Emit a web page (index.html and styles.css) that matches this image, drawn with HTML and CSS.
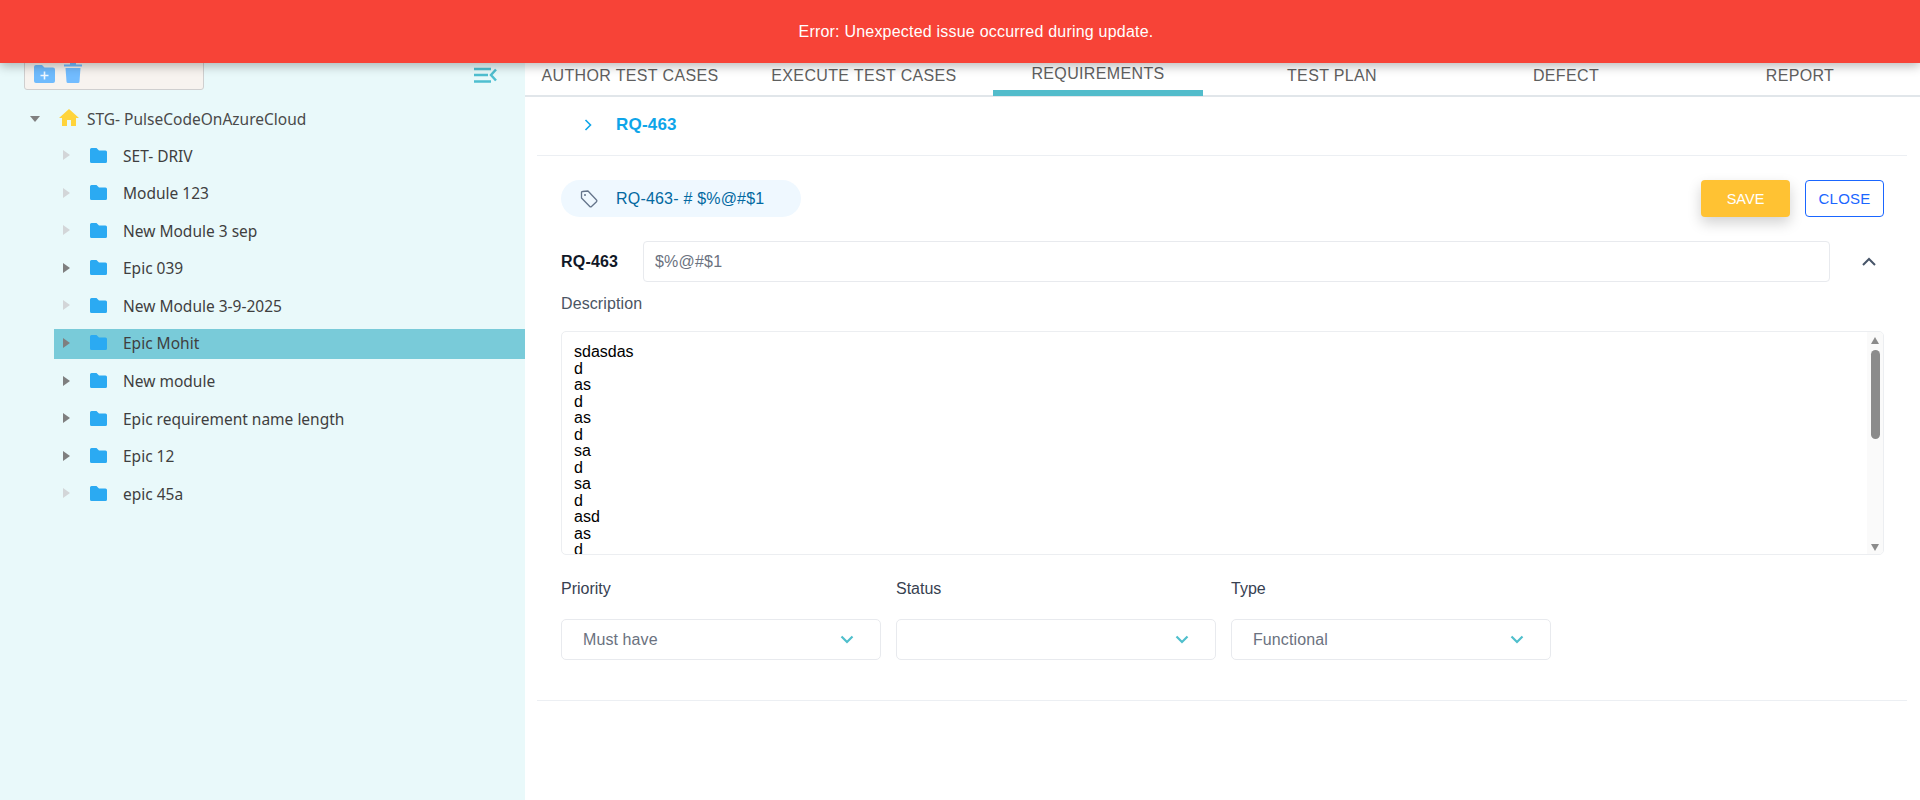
FILE: index.html
```html
<!DOCTYPE html>
<html lang="en">
<head>
<meta charset="utf-8">
<title>Requirements</title>
<link rel="stylesheet" href="styles.css">
</head>
<body>
<div class="toast">Error: Unexpected issue occurred during update.</div>
<div class="app">
  <aside class="sidebar">
    <div class="side-head">
      <div class="toolbar">
        <svg class="tool-icon" width="21" height="18" viewBox="0 0 21 18"><path fill="#6fbbfd" d="M2 0H8L10.5 2.500H19A2 2 0 0 1 21 4.500V16A2 2 0 0 1 19 18H2A2 2 0 0 1 0 16V2A2 2 0 0 1 2 0Z"/><path fill="#fff" opacity=".9" d="M9.700 6.500H11.300V9.700H14.500V11.300H11.300V14.500H9.700V11.300H6.500V9.700H9.700Z"/></svg>
        <svg class="tool-icon trash" width="18" height="20" viewBox="0 0 18 20"><path fill="#72bcff" d="M6 0H12V1.500H18V3.500H0V1.500H6ZM1.500 5H16.500L15.500 18.500A1.500 1.500 0 0 1 14 20H4A1.500 1.500 0 0 1 2.500 18.500Z"/></svg>
      </div>
      <svg class="collapse" width="23" height="16" viewBox="0 0 23 16"><path fill="none" stroke="#4fbfd0" stroke-width="2.500" d="M0 2H17M0 8H14M0 14.500H17"/><path fill="none" stroke="#4fbfd0" stroke-width="2.500" d="M22 2.500L17 8L22 13.500"/></svg>
    </div>
    <div class="tree-root">
      <span class="caret-down"></span>
      <svg class="home" width="24" height="24" viewBox="0 0 24 24"><path fill="#ffd43b" d="M10 20v-6h4v6h5v-8h3L12 3 2 12h3v8z"/></svg>
      <span class="root-name">STG- PulseCodeOnAzureCloud</span>
    </div>
    <ul class="tree">
      <li class="node"><span class="caret leaf"></span><svg class="folder" viewBox="0 0 17 15"><use href="#folder-shape"/></svg><span class="node-name">SET- DRIV</span></li>
      <li class="node"><span class="caret leaf"></span><svg class="folder" viewBox="0 0 17 15"><use href="#folder-shape"/></svg><span class="node-name">Module 123</span></li>
      <li class="node"><span class="caret leaf"></span><svg class="folder" viewBox="0 0 17 15"><use href="#folder-shape"/></svg><span class="node-name">New Module 3 sep</span></li>
      <li class="node"><span class="caret"></span><svg class="folder" viewBox="0 0 17 15"><use href="#folder-shape"/></svg><span class="node-name">Epic 039</span></li>
      <li class="node"><span class="caret leaf"></span><svg class="folder" viewBox="0 0 17 15"><use href="#folder-shape"/></svg><span class="node-name">New Module 3-9-2025</span></li>
      <li class="node selected"><span class="caret"></span><svg class="folder" viewBox="0 0 17 15"><use href="#folder-shape"/></svg><span class="node-name">Epic Mohit</span></li>
      <li class="node"><span class="caret"></span><svg class="folder" viewBox="0 0 17 15"><use href="#folder-shape"/></svg><span class="node-name">New module</span></li>
      <li class="node"><span class="caret"></span><svg class="folder" viewBox="0 0 17 15"><use href="#folder-shape"/></svg><span class="node-name">Epic requirement name length</span></li>
      <li class="node"><span class="caret"></span><svg class="folder" viewBox="0 0 17 15"><use href="#folder-shape"/></svg><span class="node-name">Epic 12</span></li>
      <li class="node"><span class="caret leaf"></span><svg class="folder" viewBox="0 0 17 15"><use href="#folder-shape"/></svg><span class="node-name">epic 45a</span></li>
    </ul>
    <svg class="defs" width="0" height="0"><defs><path id="folder-shape" fill="#2baaf2" d="M1.500 0H6.500L9 2.500H15.500A1.500 1.500 0 0 1 17 4V13.500A1.500 1.500 0 0 1 15.500 15H1.500A1.500 1.500 0 0 1 0 13.500V1.500A1.500 1.500 0 0 1 1.500 0Z"/></defs></svg>
  </aside>
  <main class="main">
    <nav class="tabs">
      <a class="tab">AUTHOR TEST CASES</a>
      <a class="tab">EXECUTE TEST CASES</a>
      <a class="tab active">REQUIREMENTS</a>
      <a class="tab">TEST PLAN</a>
      <a class="tab">DEFECT</a>
      <a class="tab">REPORT</a>
    </nav>
    <header class="crumb">
      <svg width="8" height="12" viewBox="0 0 8 12"><path fill="none" stroke="#0ea5e9" stroke-width="1.600" d="M1.500 1L6.500 6L1.500 11"/></svg>
      <span class="crumb-id">RQ-463</span>
    </header>
    <section class="form">
      <div class="actions">
        <div class="pill">
          <svg width="18" height="18" viewBox="0 0 18 18"><path fill="none" stroke="#64748b" stroke-width="1.300" stroke-linejoin="round" d="M1.500 2.500A1 1 0 0 1 2.500 1.500L8 1L16.500 10A1.200 1.200 0 0 1 16.500 11.700L11.500 16.500A1.200 1.200 0 0 1 9.800 16.500L1.500 8Z"/><circle cx="5" cy="5" r="1" fill="#64748b"/></svg>
          <span>RQ-463- # $%@#$1</span>
        </div>
        <div class="buttons">
          <button class="btn save">SAVE</button>
          <button class="btn close">CLOSE</button>
        </div>
      </div>
      <div class="title-row">
        <label class="title-label">RQ-463</label>
        <input class="title-input" type="text" value="$%@#$1">
        <svg class="collapse-up" width="14" height="9" viewBox="0 0 14 9"><path fill="none" stroke="#475569" stroke-width="2" d="M1 8L7 2L13 8"/></svg>
      </div>
      <div class="desc-label">Description</div>
      <div class="desc-wrap">
        <textarea class="desc" readonly>sdasdas
d
as
d
as
d
sa
d
sa
d
asd
as
d
as
d
sa
d
as
d
sa
d
as
d
sa
d
as
d
sa
d</textarea>
        <div class="scrollbar">
          <span class="arrow-up"></span>
          <span class="thumb"></span>
          <span class="arrow-down"></span>
        </div>
      </div>
      <div class="fields">
        <div class="field">
          <div class="field-label">Priority</div>
          <div class="select"><span>Must have</span><svg width="14" height="9" viewBox="0 0 14 9"><path fill="none" stroke="#4fbfcc" stroke-width="2.200" d="M1.500 1.500L7 7L12.500 1.500"/></svg></div>
        </div>
        <div class="field">
          <div class="field-label">Status</div>
          <div class="select"><span></span><svg width="14" height="9" viewBox="0 0 14 9"><path fill="none" stroke="#4fbfcc" stroke-width="2.200" d="M1.500 1.500L7 7L12.500 1.500"/></svg></div>
        </div>
        <div class="field">
          <div class="field-label">Type</div>
          <div class="select"><span>Functional</span><svg width="14" height="9" viewBox="0 0 14 9"><path fill="none" stroke="#4fbfcc" stroke-width="2.200" d="M1.500 1.500L7 7L12.500 1.500"/></svg></div>
        </div>
      </div>
    </section>
  </main>
</div>
</body>
</html>
```
FILE: styles.css
```css
* { box-sizing: border-box; }
html, body { margin: 0; height: 100%; overflow: hidden; background: #fff; }
body { font-family: "Liberation Sans", Arial, sans-serif; font-size: 16px; color: #374151; }

.toast {
  position: absolute; top: 0; left: 0; right: 0; height: 63px; z-index: 10;
  display: flex; align-items: center; justify-content: center;
  padding-left: 32px;
  background: #f74337; color: #fff; font-size: 16px; letter-spacing: .21px;
  box-shadow: 0 3px 10px rgba(0, 0, 0, .28);
}

.app { display: flex; height: 800px; }

.sidebar { width: 525px; flex: none; background: #e9f9fa; padding-top: 50px; font-family: "Noto Sans", sans-serif; font-size: 15.500px; color: #444; }
.side-head { display: flex; justify-content: space-between; padding: 0 28px 0 24px; height: 40px; }
.toolbar { width: 180px; height: 40px; display: flex; align-items: flex-start; gap: 9px; padding: 13px 0 0 9px; background: #f7f3ef; border: 1px solid #cfcfcf; border-radius: 3px; }
.tool-icon { display: block; margin-top: 1px; }
.trash { margin-top: -1px; }
.collapse { margin-top: 17px; display: block; }

.tree-root { display: flex; align-items: center; height: 30px; margin-top: 14px; padding-left: 30px; }
.caret-down { width: 0; height: 0; border-left: 5.500px solid transparent; border-right: 5.500px solid transparent; border-top: 6px solid #808080; }
.home { margin-left: 17px; margin-right: 6px; margin-top: -2px; }
.root-name { color: #4a4a4a; }

.tree { list-style: none; margin: 7px 0 0 54px; padding: 0; display: flex; flex-direction: column; gap: 7.600px; }
.node { display: flex; align-items: center; height: 30px; padding-left: 9px; color: #3f3f3f; }
.node.selected { background: #79cbd9; }
.node-name { margin-top: -1px; }
.caret { width: 0; height: 0; margin-top: -2px; border-top: 5.500px solid transparent; border-bottom: 5.500px solid transparent; border-left: 7px solid #7f7f7f; }
.caret.leaf { border-left-color: #d3d6d8; }
.folder { width: 17px; height: 15px; margin: -2px 16px 0 20px; flex: none; }
.defs { position: absolute; }

.main { flex: 1; min-width: 0; padding-top: 50px; }
.tabs { display: flex; gap: 24px; height: 47px; border-bottom: 2px solid #e1e6ea; }
.tab { width: 210px; height: 46px; display: flex; align-items: center; justify-content: center; padding-top: 6px; color: #5f5f5f; white-space: nowrap; letter-spacing: .35px; }
.tab.active { border-bottom: 6px solid #52bccb; padding-top: 8px; }

.crumb { display: flex; align-items: center; gap: 24px; height: 59px; margin: 0 13px 0 12px; padding: 0 0 2px 47px; border-bottom: 1px solid #eceff3; }
.crumb-id { color: #0ea5e9; font-weight: 700; font-size: 17px; letter-spacing: .2px; }

.form { margin: 0 13px 0 12px; padding: 24px 23px 40px 24px; border-bottom: 1px solid #eceff3; }
.actions { display: flex; justify-content: space-between; height: 37px; }
.pill { display: flex; align-items: center; gap: 18px; padding: 0 37px 0 19px; background: #eff8ff; border-radius: 19px; color: #0369a1; letter-spacing: .2px; }
.buttons { display: flex; gap: 15px; }
.btn { font-family: inherit; height: 37px; border-radius: 4px; padding: 0; cursor: pointer; }
.save { width: 89px; background: #ffc233; border: 0; color: #fff; font-size: 14.500px; box-shadow: 0 6px 14px rgba(0, 0, 0, .18); }
.close { width: 79px; background: #fff; border: 1px solid #1a66ff; color: #1a66ff; font-size: 15px; letter-spacing: .2px; }

.title-row { display: flex; align-items: center; margin-top: 24px; height: 41px; }
.title-label { width: 82px; flex: none; font-weight: 700; font-size: 16px; letter-spacing: .2px; color: #111827; }
.title-input { flex: 1; min-width: 0; height: 41px; margin-right: 32px; padding: 0 11px; border: 1px solid #e8eaee; border-radius: 4px; font: inherit; letter-spacing: .2px; color: #6b7280; outline: 0; }
.collapse-up { margin-right: 8px; flex: none; }

.desc-label { margin-top: 13px; height: 18px; line-height: 18px; color: #4b5563; letter-spacing: .1px; }
.desc-wrap { position: relative; margin-top: 18px; height: 224px; }
.desc { display: block; width: 100%; height: 100%; padding: 12px 12px; resize: none; border: 1px solid #eceef1; border-radius: 5px; font-family: "Liberation Sans", Arial, sans-serif; font-size: 16px; line-height: 16.500px; color: #000; outline: 0; overflow: hidden; }
.scrollbar { position: absolute; top: 1px; right: 1px; bottom: 1px; width: 16px; display: flex; flex-direction: column; align-items: center; background: #fafafa; padding-top: 5px; border-radius: 0 4px 4px 0; }
.arrow-up { width: 0; height: 0; border-left: 4.500px solid transparent; border-right: 4.500px solid transparent; border-bottom: 7px solid #8b8b8b; }
.thumb { width: 9px; height: 89px; margin-top: 6px; border-radius: 4.500px; background: #8b8b8b; }
.arrow-down { width: 0; height: 0; margin-top: auto; margin-bottom: 3px; border-left: 4.500px solid transparent; border-right: 4.500px solid transparent; border-top: 7px solid #8b8b8b; }

.fields { display: flex; gap: 15px; margin-top: 25px; }
.field { width: 320px; }
.field-label { height: 18px; line-height: 18px; color: #374151; }
.select { display: flex; align-items: center; justify-content: space-between; height: 41px; margin-top: 21px; padding: 0 26px 0 21px; border: 1px solid #e8eaee; border-radius: 5px; color: #6b7280; letter-spacing: .1px; }
```
